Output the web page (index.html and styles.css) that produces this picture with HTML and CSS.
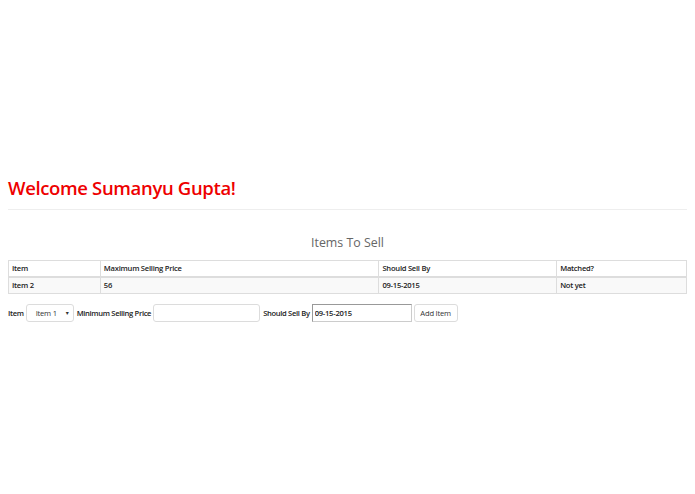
FILE: index.html
```html
<!DOCTYPE html>
<html>
<head>
<meta charset="utf-8">
<link rel="stylesheet" href="styles.css">
</head>
<body>
<div class="page">
  <h1 class="welcome">Welcome Sumanyu Gupta!</h1>
  <hr class="rule">
  <h2 class="section-title">Items To Sell</h2>
  <table class="items">
    <colgroup>
      <col class="c1"><col class="c2"><col class="c3"><col class="c4">
    </colgroup>
    <thead>
      <tr><th>Item</th><th>Maximum Selling Price</th><th>Should Sell By</th><th>Matched?</th></tr>
    </thead>
    <tbody>
      <tr><td>Item 2</td><td>56</td><td>09-15-2015</td><td>Not yet</td></tr>
    </tbody>
  </table>
  <form class="add-form">
    <label class="lbl">Item</label>
    <div class="select">Item 1<span class="caret">&#9662;</span></div>
    <label class="lbl">Minimum Selling Price</label>
    <input class="field price" type="text">
    <label class="lbl">Should Sell By</label>
    <input class="field date" type="text" value="09-15-2015">
    <button class="btn" type="button">Add Item</button>
  </form>
</div>
</body>
</html>
```

FILE: styles.css
```css
html, body {
  margin: 0;
  padding: 0;
  background: #fff;
}
body {
  font-family: "Open Sans", "DejaVu Sans", sans-serif;
  color: #333;
}
.page {
  padding: 174px 8px 0 8px;
}
.welcome {
  margin: 0;
  font-size: 18.5px;
  font-weight: 600;
  color: #ee0000;
  line-height: 28px;
  letter-spacing: -0.35px;
}
.rule {
  margin: 7px 0 0 0;
  border: 0;
  border-top: 1px solid #eeeeee;
  height: 0;
}
.section-title {
  margin: 23px 0 0 0;
  font-size: 12.4px;
  font-weight: 400;
  color: #666;
  text-align: center;
  line-height: 20px;
}
.items {
  margin-top: 7px;
  width: 100%;
  border-collapse: collapse;
  font-size: 7.6px;
  letter-spacing: -0.25px;
  font-weight: 600;
  color: #222;
}
.c1 { width: 92px; }
.c2 { width: 279px; }
.c3 { width: 178px; }
.c4 { width: 130px; }
.items th, .items td {
  border: 1px solid #dddddd;
  text-align: left;
  padding: 0 3px;
  height: 15px;
  line-height: 15px;
  font-weight: 600;
}
.items thead th {
  border-bottom: 2px solid #dddddd;
}
.items tbody tr {
  background: #f9f9f9;
}
.add-form {
  margin-top: 10px;
  display: flex;
  align-items: center;
  font-size: 7.6px;
  letter-spacing: -0.33px;
  font-weight: 600;
  color: #222;
}
.lbl {
  margin-right: 2px;
}
.select {
  box-sizing: border-box;
  width: 48px;
  height: 18px;
  border: 1px solid #dcdcdc;
  border-radius: 3px;
  display: flex;
  align-items: center;
  padding-left: 9px;
  font-weight: 400;
  letter-spacing: -0.2px;
  position: relative;
  color: #333;
  margin-right: 3px;
}
.caret {
  position: absolute;
  right: 4px;
  top: 4px;
  font-size: 6px;
}
.field {
  box-sizing: border-box;
  height: 18px;
  border: 1px solid #dcdcdc;
  border-radius: 3px;
  padding: 0 2px;
  font-family: inherit;
  font-size: 7.6px;
  letter-spacing: -0.25px;
  color: #222;
  margin: 0 3px 0 0;
}
.price { width: 107px; }
.date {
  width: 100px;
  border-radius: 0;
  border-color: #999 #ccc #ccc #999;
  font-weight: 600;
  margin-right: 2px;
}
.btn {
  box-sizing: border-box;
  height: 18px;
  width: 44px;
  border: 1px solid #dcdcdc;
  border-radius: 3px;
  background: #fff;
  font-family: inherit;
  font-size: 7.6px;
  letter-spacing: -0.2px;
  color: #333;
  padding: 0;
}
```
